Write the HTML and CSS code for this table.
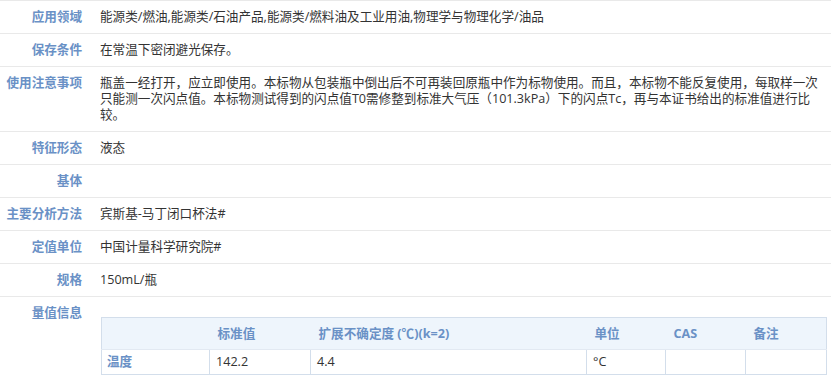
FILE: index.html
```html
<!DOCTYPE html>
<html lang="zh-CN">
<head>
<meta charset="utf-8">
<title>详情</title>
<link rel="stylesheet" href="styles.css">
</head>
<body>
<div class="detail">
  <div class="row">
    <div class="label">应用领域</div>
    <div class="value">能源类/燃油,能源类/石油产品,能源类/燃料油及工业用油,物理学与物理化学/油品</div>
  </div>
  <div class="row">
    <div class="label">保存条件</div>
    <div class="value">在常温下密闭避光保存。</div>
  </div>
  <div class="row">
    <div class="label">使用注意事项</div>
    <div class="value">瓶盖一经打开，应立即使用。本标物从包装瓶中倒出后不可再装回原瓶中作为标物使用。而且，本标物不能反复使用，每取样一次只能测一次闪点值。本标物测试得到的闪点值T0需修整到标准大气压（101.3kPa）下的闪点Tc，再与本证书给出的标准值进行比较。</div>
  </div>
  <div class="row">
    <div class="label">特征形态</div>
    <div class="value">液态</div>
  </div>
  <div class="row">
    <div class="label">基体</div>
    <div class="value"></div>
  </div>
  <div class="row">
    <div class="label">主要分析方法</div>
    <div class="value">宾斯基-马丁闭口杯法#</div>
  </div>
  <div class="row">
    <div class="label">定值单位</div>
    <div class="value">中国计量科学研究院#</div>
  </div>
  <div class="row">
    <div class="label">规格</div>
    <div class="value">150mL/瓶</div>
  </div>
  <div class="row last">
    <div class="label">量值信息</div>
    <div class="value table-cell">
      <table class="qty">
        <thead>
          <tr>
            <th class="c1"></th>
            <th class="c2">标准值</th>
            <th class="c3">扩展不确定度 (℃)(k=2)</th>
            <th class="c4">单位</th>
            <th class="c5">CAS</th>
            <th class="c6">备注</th>
          </tr>
        </thead>
        <tbody>
          <tr>
            <td class="name">温度</td>
            <td>142.2</td>
            <td>4.4</td>
            <td>°C</td>
            <td></td>
            <td></td>
          </tr>
        </tbody>
      </table>
    </div>
  </div>
</div>
</body>
</html>
```

FILE: styles.css
```css
html, body {
  margin: 0;
  padding: 0;
  background: #ffffff;
}

body {
  font-family: "Open Sans", "Noto Sans CJK SC", sans-serif;
  font-size: 12.6px;
  color: #333333;
}

.detail {
  border-top: 1px solid #e9e9e9;
}

.row {
  display: grid;
  grid-template-columns: 90px 1fr;
  border-bottom: 1px solid #e9e9e9;
}

.label {
  text-align: right;
  padding: 8px 8px 8px 0;
  line-height: 16px;
  font-weight: bold;
  color: #6a91c6;
}

.value {
  padding: 8px 8px 8px 10px;
  line-height: 16px;
  min-height: 16px;
}

.row.last {
  border-bottom: none;
}

.value.table-cell {
  padding: 20px 5px 0 11px;
}

.qty {
  width: 725px;
  border-collapse: collapse;
  border: 1px solid #d3deeb;
  table-layout: fixed;
}

.qty th,
.qty td {
  box-sizing: border-box;
}

.qty th {
  background: #eef5fc;
  color: #6a91c6;
  font-weight: bold;
  text-align: left;
  height: 32px;
  padding: 0 8px;
  line-height: 16px;
}

.qty td {
  border-left: 1px solid #d3deeb;
  border-top: 1px solid #e2e9f2;
  height: 25px;
  padding: 0 6px;
  line-height: 16px;
}

.qty td:first-child {
  border-left: none;
  padding-left: 5px;
}

.qty td.name {
  color: #6a91c6;
  font-weight: bold;
}

.c1 { width: 108px; }
.c2 { width: 101px; }
.c3 { width: 276px; }
.c4 { width: 79px; }
.c5 { width: 80px; }
.c6 { width: 81px; }
```
